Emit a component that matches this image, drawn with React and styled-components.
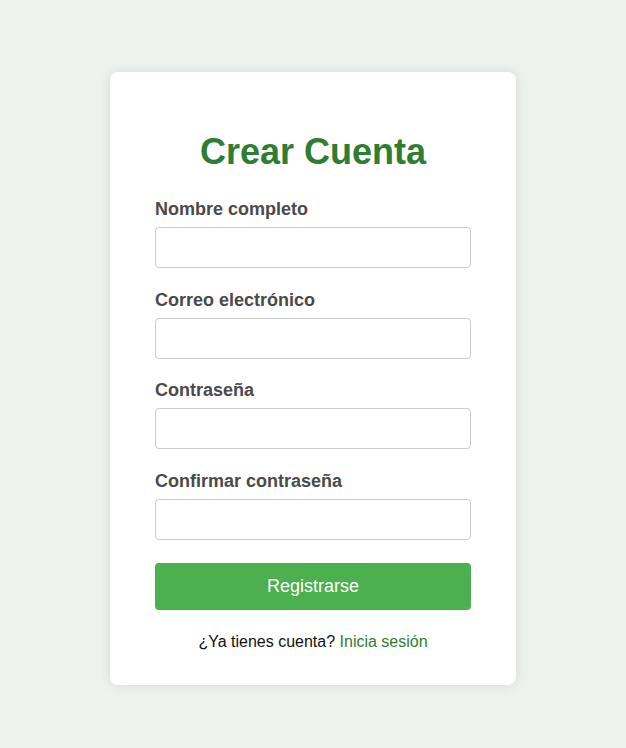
import React from "react";
import styled, { createGlobalStyle } from "styled-components";

const Global = createGlobalStyle`
  html, body { margin: 0; padding: 0; }
  body {
    background: #eef2ef;
    font-family: "Liberation Sans", Arial, sans-serif;
  }
  * { box-sizing: border-box; }
`;

const Page = styled.div`
  min-height: 748px;
  display: flex;
  justify-content: center;
  align-items: flex-start;
  padding-top: 72px;
`;

const Card = styled.div`
  width: 406px;
  background: #ffffff;
  border-radius: 8px;
  box-shadow: 0 0 12px rgba(0, 0, 0, 0.1);
  padding: 59px 45px 34px;
`;

const Title = styled.h2`
  margin: 0 0 26px;
  text-align: center;
  color: #2e7d32;
  font-size: 36px;
  font-weight: bold;
  line-height: normal;
`;

const Form = styled.form`
  margin: 0;
`;

const Group = styled.div`
  display: flex;
  flex-direction: column;
  margin-bottom: 21.6px;

  &:last-of-type {
    margin-bottom: 0;
  }
`;

const Label = styled.label`
  display: block;
  font-size: 18px;
  font-weight: bold;
  color: #4a4a4a;
  line-height: normal;
  margin-bottom: 7px;
`;

const Input = styled.input`
  width: 100%;
  height: 41px;
  border: 1px solid #cccccc;
  border-radius: 4px;
  padding: 0 10px;
  font-size: 16px;
  font-family: inherit;
  background: #fff;
  outline: none;
`;

const Button = styled.button`
  display: block;
  width: 100%;
  height: 47px;
  margin-top: 23px;
  border: none;
  border-radius: 4px;
  background: #4caf50;
  color: #ffffff;
  font-size: 18px;
  font-family: inherit;
  cursor: pointer;
`;

const Footer = styled.p`
  margin: 23px 0 0;
  text-align: center;
  font-size: 16px;
  line-height: normal;
  color: #111;
`;

const Link = styled.a`
  color: #2e7d32;
  text-decoration: none;
`;

const fields = [
  { id: "nombre", label: "Nombre completo", type: "text" },
  { id: "correo", label: "Correo electrónico", type: "email" },
  { id: "pass", label: "Contraseña", type: "password" },
  { id: "pass2", label: "Confirmar contraseña", type: "password" },
];

export default function App() {
  return (
    <>
      <Global />
      <Page>
        <Card>
          <Title>Crear Cuenta</Title>
          <Form onSubmit={(e) => e.preventDefault()}>
            {fields.map((f) => (
              <Group key={f.id}>
                <Label htmlFor={f.id}>{f.label}</Label>
                <Input id={f.id} type={f.type} />
              </Group>
            ))}
            <Button type="submit">Registrarse</Button>
          </Form>
          <Footer>
            ¿Ya tienes cuenta? <Link href="#">Inicia sesión</Link>
          </Footer>
        </Card>
      </Page>
    </>
  );
}
